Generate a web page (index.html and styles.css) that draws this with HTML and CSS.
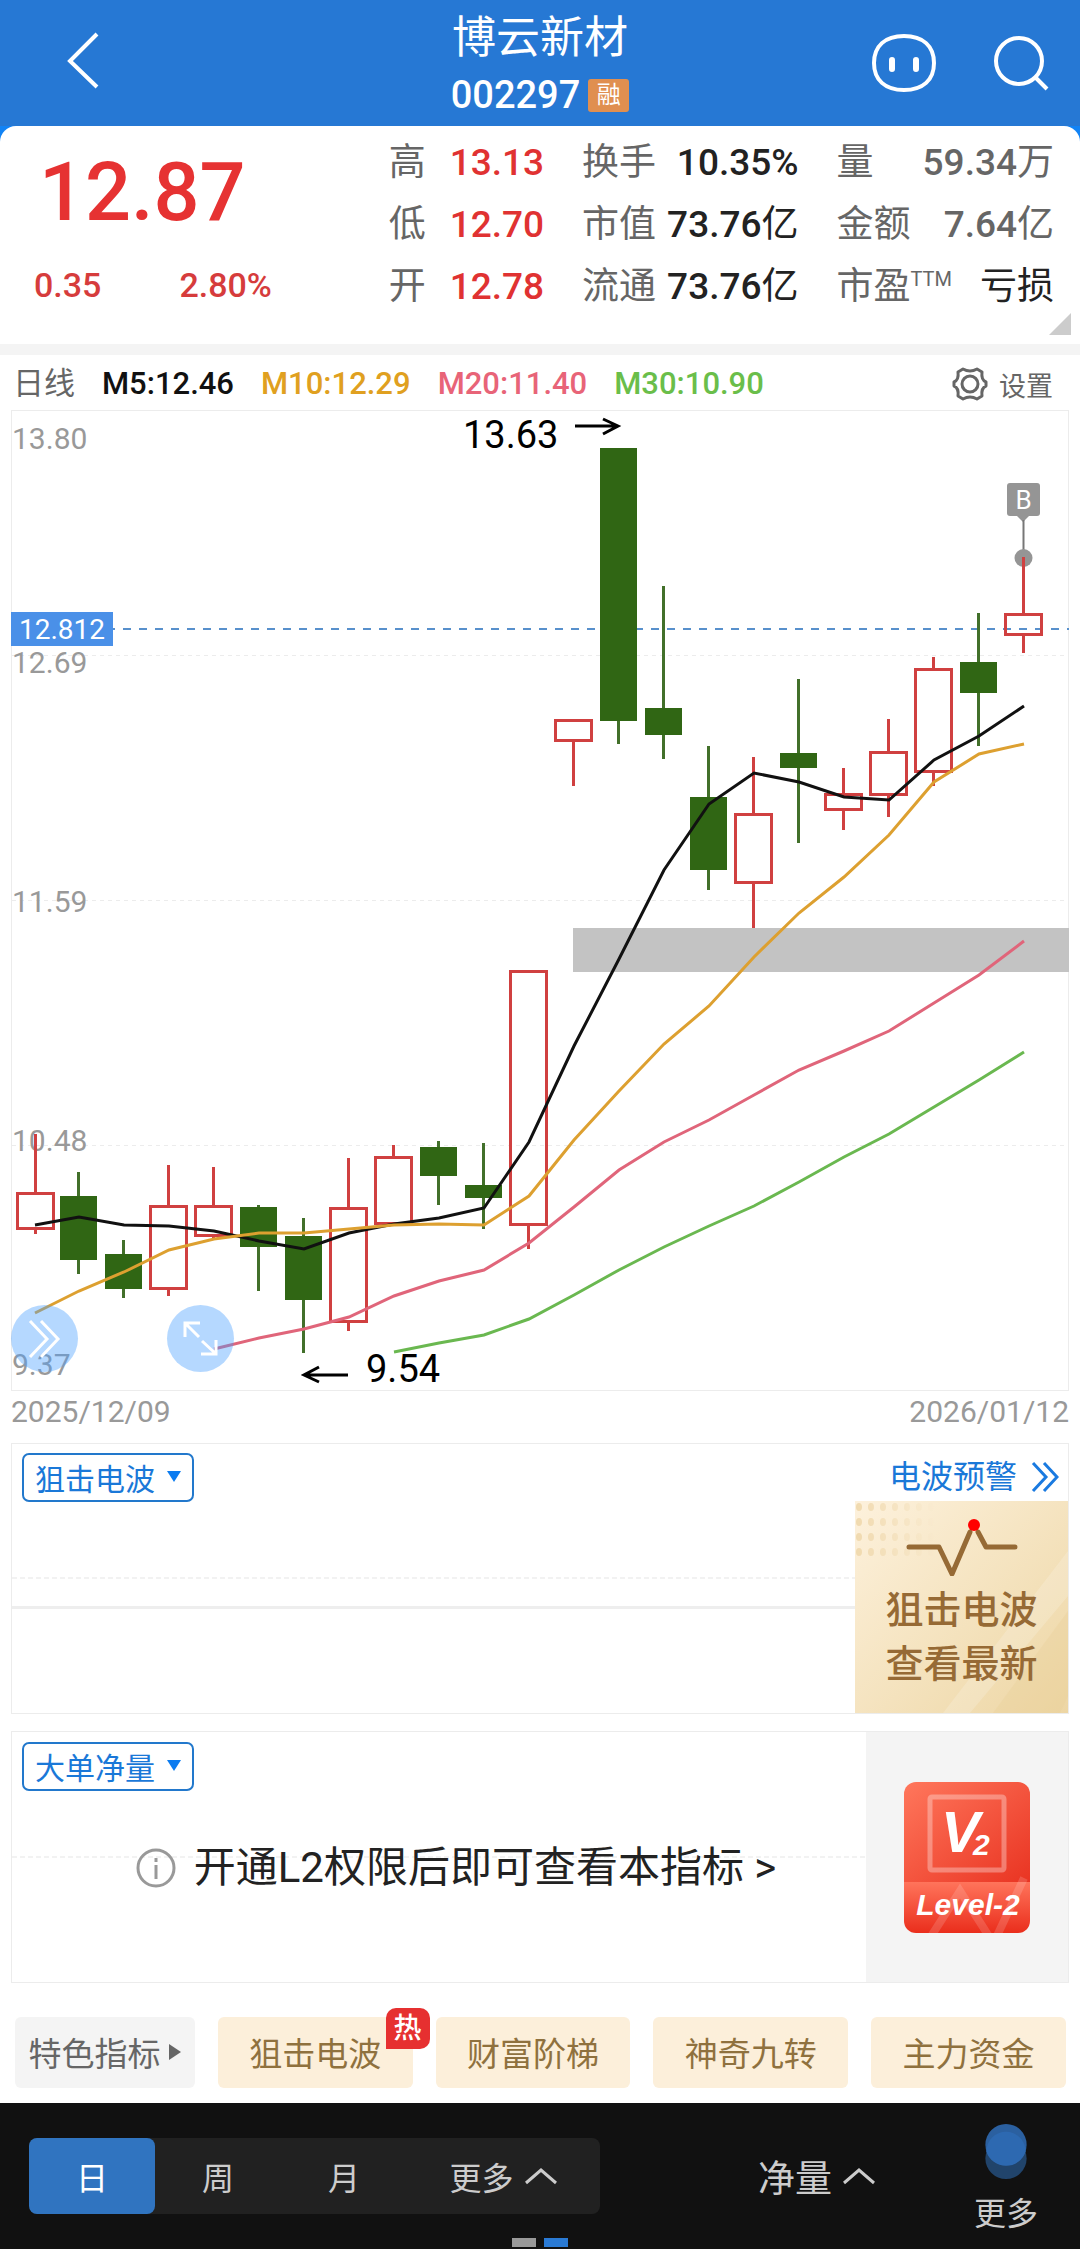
FILE: index.html
```html
<!DOCTYPE html>
<html lang="zh-CN">
<head>
  <meta charset="utf-8">
  <title>博云新材 002297</title>
  <meta name="viewport" content="width=device-width, initial-scale=1.0">
  <link rel="stylesheet" href="styles.css">
</head>

<body>

<header class="topbar">
  <button class="back" aria-label="返回">
    <svg width="36" height="60" viewBox="0 0 36 60"><path d="M33 4 6 31 33 57" fill="none" stroke="#fff" stroke-width="4"/></svg>
  </button>
  <div class="stock">
    <h1>博云新材</h1>
    <div class="code">002297 <span class="rong">融</span></div>
  </div>
  <div class="tools">
    <button aria-label="助手">
      <svg width="64" height="58" viewBox="0 0 64 58">
        <path d="M32 2C51 2 62 12 62 29S51 56 32 56 2 46 2 29 13 2 32 2z" fill="none" stroke="#fff" stroke-width="4"/>
        <path d="M20 26v9M44 26v9" stroke="#fff" stroke-width="6" stroke-linecap="round"/>
      </svg>
    </button>
    <button aria-label="搜索">
      <svg width="58" height="58" viewBox="0 0 58 58" fill="none" stroke="#fff" stroke-width="4">
        <circle cx="27" cy="27" r="23"/><path d="M43 43 55 55"/>
      </svg>
    </button>
  </div>
</header>

<main>
<section class="quote">
  <div class="price">
    <div class="last">12.87</div>
    <div class="change"><span>0.35</span><span>2.80%</span></div>
  </div>
  <dl>
    <div><dt>高</dt><dd class="red">13.13</dd></div>
    <div><dt>低</dt><dd class="red">12.70</dd></div>
    <div><dt>开</dt><dd class="red">12.78</dd></div>
  </dl>
  <dl>
    <div><dt>换手</dt><dd>10.35%</dd></div>
    <div><dt>市值</dt><dd>73.76<span class="unit">亿</span></dd></div>
    <div><dt>流通</dt><dd>73.76<span class="unit">亿</span></dd></div>
  </dl>
  <dl>
    <div><dt>量</dt><dd class="gray">59.34<span class="unit">万</span></dd></div>
    <div><dt>金额</dt><dd class="gray">7.64<span class="unit">亿</span></dd></div>
    <div><dt>市盈<sup>TTM</sup></dt><dd><span class="unit">亏损</span></dd></div>
  </dl>
  <span class="corner"></span>
</section>

<section class="legend">
  <span class="gray">日线</span>
  <span class="m5">M5:12.46</span>
  <span class="m10">M10:12.29</span>
  <span class="m20">M20:11.40</span>
  <span class="m30">M30:10.90</span>
  <button class="settings">
    <svg width="36" height="36" viewBox="0 0 36 36" fill="none" stroke="#666" stroke-width="3">
      <path d="M11 3Q18 7 25 3L30 6Q29 14 34 16V20Q29 22 30 30L25 33Q18 29 11 33L6 30Q7 22 2 20V16Q7 14 6 6Z" stroke-linejoin="round"/>
      <circle cx="18" cy="18" r="8"/>
    </svg>
    设置
  </button>
</section>

<section class="chart">
  <svg class="kline" viewBox="11 410 1058 981">
    <rect class="frame" x="11.5" y="410.5" width="1057" height="980"/>
    <path class="grid" d="M12 655.5H1069M12 900.5H1069M12 1145.5H1069"/>
    <rect x="573" y="928" width="496" height="44" fill="#c3c3c3"/>

    <path class="cost" d="M107 629H1069"/>

    <g class="axis">
      <text x="12" y="449">13.80</text>
      <text x="12" y="673">12.69</text>
      <text x="12" y="912">11.59</text>
      <text x="12" y="1151">10.48</text>
      <text x="12" y="1375">9.37</text>
    </g>

    <!-- buy marker -->
    <rect x="1007" y="483" width="33" height="33" rx="3" fill="#959595"/>
    <path d="M1016 515h14l-7 7z" fill="#959595"/>
    <path d="M1023.500 520v40" stroke="#777" stroke-width="2"/>
    <circle cx="1023.500" cy="558" r="9" fill="#959595"/>
    <text class="buy" x="1023.500" y="509">B</text>

    <!-- falling days -->
    <g class="down">
      <path d="M78.500 1172V1274M123.500 1240V1298M258.500 1205V1291M303.500 1218V1353M438.500 1141V1205M483.500 1143V1229M618.500 448V744M663.500 586V759M708.500 746V890M798.500 679V843M978.500 613V746"/>
      <rect x="60" y="1196" width="37" height="64"/>
      <rect x="105" y="1254" width="37" height="35"/>
      <rect x="240" y="1207" width="37" height="40"/>
      <rect x="285" y="1236" width="37" height="64"/>
      <rect x="420" y="1147" width="37" height="29"/>
      <rect x="465" y="1185" width="37" height="13"/>
      <rect x="600" y="448" width="37" height="273"/>
      <rect x="645" y="708" width="37" height="27"/>
      <rect x="690" y="797" width="37" height="73"/>
      <rect x="780" y="753" width="37" height="15"/>
      <rect x="960" y="662" width="37" height="31"/>
    </g>

    <!-- rising days -->
    <g class="up">
      <path d="M35.500 1134V1194M35.500 1228V1234M168.500 1165V1206M168.500 1289V1296M213.500 1167V1206M213.500 1236V1239M348.500 1158V1208M348.500 1322V1331M393.500 1145V1157M528.500 1225V1249M573.500 741V786M753.500 757V815M753.500 883V928M843.500 768V794M843.500 810V830M888.500 719V752M888.500 795V817M933.500 657V669M933.500 772V786M1023.500 557V614M1023.500 635V653"/>
      <rect x="17.500" y="1193.500" width="36" height="35"/>
      <rect x="150.500" y="1206.500" width="36" height="82"/>
      <rect x="195.500" y="1206.500" width="36" height="29"/>
      <rect x="330.500" y="1208.500" width="36" height="113"/>
      <rect x="375.500" y="1157.500" width="36" height="66"/>
      <rect x="510.500" y="971.500" width="36" height="253"/>
      <rect x="555.500" y="720.500" width="36" height="20"/>
      <rect x="735.500" y="814.500" width="36" height="68"/>
      <rect x="825.500" y="794.500" width="36" height="15"/>
      <rect x="870.500" y="752.500" width="36" height="42"/>
      <rect x="915.500" y="669.500" width="36" height="102"/>
      <rect x="1005.500" y="614.500" width="36" height="20"/>
    </g>

    <!-- moving averages -->
    <polyline class="ma s5" points="35,1225 79,1217 124,1225 169,1226 214,1231 259,1241 304,1249 349,1233 394,1224 439,1218 484,1208 529,1142 574,1046 619,959 664,870 709,804 754,773 799,782 844,797 889,800 934,760 979,736 1024,706"/>
    <polyline class="ma s10" points="35,1313 79,1291 124,1272 169,1250 214,1239 259,1233 304,1233 349,1229 394,1225 439,1224 484,1225 529,1196 574,1140 619,1091 664,1044 709,1006 754,957 799,913 844,877 889,835 934,782 979,754 1024,744"/>
    <polyline class="ma s20" points="214,1349 259,1338 304,1329 349,1317 394,1296 439,1281 484,1270 529,1243 574,1207 619,1170 664,1142 709,1120 754,1095 799,1070 844,1051 889,1031 934,1003 979,975 1024,941"/>
    <polyline class="ma s30" points="394,1352 439,1343 484,1335 529,1319 574,1295 619,1270 664,1247 709,1226 754,1206 799,1182 844,1157 889,1134 934,1107 979,1080 1024,1052"/>

    <rect x="11" y="612" width="102" height="34" fill="#4a90e8"/>
    <text class="costText" x="19" y="639">12.812</text>

    <!-- highest and lowest price -->
    <text class="peak" x="463" y="448">13.63</text>
    <path class="arrow" d="M575 426H618M603 419 618 426 603 434"/>
    <text class="peak" x="366" y="1382">9.54</text>
    <path class="arrow" d="M348 1375H304M319 1367 304 1375 319 1382"/>
  </svg>

  <button class="round" aria-label="展开">
    <svg width="40" height="44" viewBox="0 0 40 44"><path d="M5 4 22 22 5 40M16 4 33 22 16 40"/></svg>
  </button>
  <button class="round full" aria-label="全屏">
    <svg width="40" height="44" viewBox="0 0 40 44"><path d="M4 20V6H19M4 6 18 20M21 24 35 37M35 23V37H20"/></svg>
  </button>
</section>

<div class="dates"><span>2025/12/09</span><span>2026/01/12</span></div>

<section class="panel wave">
  <div class="waveLeft">
    <button class="picker">狙击电波 <i class="tri"></i></button>
  </div>
  <a class="alert" href="#">电波预警
    <svg width="28" height="32" viewBox="0 0 28 32"><path d="M2 2 15 16 2 30M13 2 26 16 13 30" fill="none" stroke="#1a7ae0" stroke-width="3"/></svg>
  </a>
  <a class="promo" href="#">
    <svg class="promoBg" viewBox="0 0 213 212" preserveAspectRatio="none">
      <defs>
        <pattern id="dots" width="12" height="15" patternUnits="userSpaceOnUse"><ellipse cx="4" cy="6" rx="3" ry="4" fill="#f0d9ae"/></pattern>
        <linearGradient id="fade"><stop offset="0" stop-color="#fff"/><stop offset="1" stop-color="#000"/></linearGradient>
        <mask id="m"><rect width="80" height="60" fill="url(#fade)"/></mask>
      </defs>
      <rect width="80" height="60" fill="url(#dots)" mask="url(#m)"/>
      <path d="M88 212 213 50V95L115 212z" fill="#fff" opacity=".18"/>
      <path d="M138 212 213 110V195L205 212z" fill="#e8cd95" opacity=".3"/>
    </svg>
    <svg class="pulse" width="114" height="60" viewBox="0 0 114 60" fill="none">
      <path d="M4 31H34L47 58 65 16M73 16 81 31H110" stroke="#966a35" stroke-width="5" stroke-linecap="round" stroke-linejoin="round"/>
      <circle cx="69" cy="9" r="6" fill="#f00"/>
    </svg>
    <span>狙击电波<br>查看最新</span>
  </a>
</section>

<section class="panel big">
  <div class="bigLeft">
    <button class="picker">大单净量 <i class="tri"></i></button>
    <a class="unlock" href="#">
      <svg width="40" height="40" viewBox="0 0 40 40" fill="none" stroke="#999" stroke-width="3">
        <circle cx="20" cy="20" r="18"/><path d="M20 17V31M20 10V14"/>
      </svg>
      开通L2权限后即可查看本指标 &gt;
    </a>
  </div>
  <a class="level" href="#" aria-label="Level-2">
    <svg width="126" height="151" viewBox="0 0 126 151">
      <defs>
        <linearGradient id="lv" x2="1" y2="1"><stop offset="0" stop-color="#ff775c"/><stop offset="1" stop-color="#e93422"/></linearGradient>
        <linearGradient id="lb" x2="0" y2="1"><stop offset="0" stop-color="#ff745b"/><stop offset="1" stop-color="#ea2e1c"/></linearGradient>
        <clipPath id="lc"><rect width="126" height="151" rx="12"/></clipPath>
      </defs>
      <g clip-path="url(#lc)">
        <rect width="126" height="101" fill="url(#lv)"/>
        <rect y="100" width="126" height="51" fill="url(#lb)"/>
        <path d="M26 156 56 109 86 156M92 156 120 96" fill="none" stroke="#fff" stroke-width="8" opacity=".15"/>
      </g>
      <rect x="26" y="15" width="74" height="73" rx="2" fill="none" stroke="#fff" stroke-width="5" opacity=".32"/>
      <text class="lvV" x="37" y="70">V</text>
      <text class="lv2" x="69" y="73">2</text>
      <text class="lvText" x="64" y="133">Level-2</text>
    </svg>
  </a>
</section>

<nav class="chips">
  <button class="chip plain">特色指标 <i class="triRight"></i></button>
  <button class="chip">狙击电波<span class="hot">热</span></button>
  <button class="chip">财富阶梯</button>
  <button class="chip">神奇九转</button>
  <button class="chip">主力资金</button>
</nav>
</main>

<footer class="bottom">
  <div class="bar">
    <div class="periods">
      <button class="on">日</button>
      <button>周</button>
      <button>月</button>
      <button class="wide">更多 <svg width="34" height="18" viewBox="0 0 34 18"><path d="M2 16 17 3 32 16"/></svg></button>
    </div>
    <button class="net">净量 <svg width="34" height="18" viewBox="0 0 34 18"><path d="M2 16 17 3 32 16"/></svg></button>
    <button class="more">
      <svg width="42" height="56" viewBox="0 0 42 56">
        <circle cx="21" cy="35" r="21" fill="#21446b"/>
        <circle cx="21" cy="21" r="21" fill="#2b60a0"/>
        <path d="M1 28A20 20 0 0 1 41 28 21 21 0 0 1 1 28z" fill="#2d69b1"/>
      </svg>
      更多
    </button>
  </div>
  <div class="pages"><i></i><i class="on"></i></div>
</footer>

</body>
</html>
```

FILE: styles.css
```css
* {
  box-sizing: border-box;
}

body {
  margin: 0;
  background: #fff;
  color: #222;
  font-family: Roboto, "Noto Sans CJK SC", sans-serif;
}

button {
  padding: 0;
  border: none;
  background: none;
  color: inherit;
  font-family: inherit;
}

a {
  text-decoration: none;
}

svg {
  display: block;
}

.red { color: #e03232; }
.gray { color: #666; }

/* top bar */
.topbar {
  display: grid;
  grid-template-columns: 1fr auto 1fr;
  height: 126px;
  padding: 0 30px;
  background: #2678d4;
  color: #fff;
}
.back {
  justify-self: start;
  align-self: start;
  padding: 30px 34px 0;
}
.stock {
  display: flex;
  flex-direction: column;
  align-items: center;
  padding-top: 10px;
}
.stock h1 {
  margin: 0;
  font-size: 44px;
  line-height: 56px;
  font-weight: 400;
}
.code {
  display: flex;
  align-items: center;
  gap: 8px;
  font-size: 38px;
  line-height: 58px;
  font-weight: 500;
}
.rong {
  width: 41px;
  border-radius: 3px;
  background: #e08f50;
  font-size: 24px;
  line-height: 33px;
  font-weight: 400;
  text-align: center;
}
.tools {
  display: flex;
  justify-content: flex-end;
  align-items: center;
  gap: 56px;
}

/* blue shows behind the rounded corners of the quote card */
main {
  background: linear-gradient(#1283f5 40px, #fff 40px);
}

/* quote */
.quote {
  position: relative;
  display: grid;
  grid-template-columns: 316fr 155fr 216fr 217fr;
  column-gap: 38px;
  height: 229px;
  padding: 6px 26px 0 34px;
  border-bottom: 11px solid #f4f4f4;
  border-radius: 16px 16px 0 0;
  background: #fff;
}
.last {
  padding-left: 5px;
  color: #e63232;
  font-size: 81px;
  line-height: 122px;
  font-weight: 500;
}
.change {
  display: flex;
  gap: 78px;
  color: #d63c3c;
  font-size: 34px;
  line-height: 62px;
  font-weight: 500;
}
dl {
  margin: 0;
  line-height: 62px;
}
dl div {
  display: flex;
  justify-content: space-between;
  height: 62px;
  white-space: nowrap;
}
dt {
  color: #666;
  font-size: 37px;
}
dd {
  margin: 0;
  font-size: 37px;
  font-weight: 500;
}
.unit {
  font-weight: 400;
}
dl sup {
  font-size: 20px;
  line-height: 20px;
}
.corner {
  position: absolute;
  right: 9px;
  bottom: 9px;
  border-left: 22px solid transparent;
  border-bottom: 22px solid #ccc;
}

/* moving average legend */
.legend {
  display: flex;
  align-items: center;
  gap: 27px;
  height: 55px;
  padding: 3px 27px 0 13px;
  background: #fff;
  font-size: 31px;
  line-height: 40px;
}
.m5 { color: #111; }
.m10 { color: #e0a020; }
.m20 { color: #e86478; }
.m30 { color: #6abe4a; }
.m5, .m10, .m20, .m30 { font-weight: 500; }
.settings {
  display: flex;
  align-items: center;
  gap: 11px;
  margin-left: auto;
  color: #666;
  font-size: 27px;
}

/* candles */
.chart {
  position: relative;
  padding: 0 11px;
  background: #fff;
}
.kline {
  width: 100%;
  height: auto;
}
.frame {
  fill: none;
  stroke: #ececec;
}
.grid {
  stroke: #ececec;
  stroke-dasharray: 4 4;
}
.cost {
  stroke: #5890cc;
  stroke-width: 2;
  stroke-dasharray: 8 8;
}
.axis {
  fill: #999;
  font-size: 30px;
}
.buy {
  fill: #fff;
  font-size: 26px;
  text-anchor: middle;
}
.costText {
  fill: #fff;
  font-size: 28px;
}
.peak {
  fill: #000;
  font-size: 38px;
}
.arrow {
  fill: none;
  stroke: #000;
  stroke-width: 3;
}
.down {
  fill: #306614;
}
.down path {
  stroke: #42702a;
  stroke-width: 3;
}
.up {
  fill: none;
  stroke: #d04040;
  stroke-width: 3;
}
.ma {
  fill: none;
  stroke-width: 3;
}
.s5 { stroke: #111; }
.s10 { stroke: #dda030; }
.s20 { stroke: #e0657a; }
.s30 { stroke: #6ab850; }

.round {
  position: absolute;
  left: 11px;
  bottom: 19px;
  display: flex;
  align-items: center;
  justify-content: center;
  width: 67px;
  height: 67px;
  border-radius: 50%;
  background: rgba(70, 158, 255, .4);
}
.round.full {
  left: 167px;
}
.round path {
  fill: none;
  stroke: #fff;
  stroke-width: 3;
}

.dates {
  display: flex;
  justify-content: space-between;
  height: 52px;
  padding: 0 11px;
  background: #fff;
  color: #999;
  font-size: 30px;
  line-height: 41px;
}

/* indicator panels */
.panel {
  display: grid;
  border: 1px solid #ececec;
  margin: 0 11px;
  background: #fff;
}
.picker {
  display: flex;
  align-items: center;
  gap: 12px;
  height: 49px;
  padding: 0 11px 2px;
  border: 2px solid #2278cc;
  border-radius: 7px;
  background: #fff;
  color: #1a78d8;
  font-size: 30px;
}
.tri {
  border: 7px solid transparent;
  border-top: 11px solid #0c7cf0;
  border-bottom: 0;
}
.wave {
  grid-template-columns: 1fr 213px;
  grid-template-rows: 57px 212px;
}
.waveLeft {
  grid-row: span 2;
  padding: 9px 10px;
  background:
    linear-gradient(#eee, #eee) 0 162px / 100% 3px no-repeat,
    repeating-linear-gradient(90deg, #f2f2f2 0 5px, transparent 5px 8px) 0 133px / 100% 2px no-repeat;
}
.alert {
  display: flex;
  align-items: center;
  justify-content: flex-end;
  gap: 14px;
  padding: 8px 9px 0 0;
  color: #1a78d8;
  font-size: 32px;
  line-height: 40px;
  white-space: nowrap;
}
.promo {
  position: relative;
  display: flex;
  flex-direction: column;
  align-items: center;
  padding-top: 15px;
  background: linear-gradient(135deg, #fdf1dc, #edd6a4);
  color: #966a35;
  font-size: 38px;
  line-height: 54px;
  font-weight: 500;
}
.promoBg {
  position: absolute;
  left: 0;
  top: 0;
  width: 100%;
  height: 100%;
}
.pulse, .promo span {
  position: relative;
}
.promo span {
  margin-top: 7px;
}

.big {
  grid-template-columns: 1fr 202px;
  height: 252px;
  margin-top: 17px;
}
.bigLeft {
  padding: 10px;
  background: repeating-linear-gradient(90deg, #f2f2f2 0 5px, transparent 5px 8px) 0 124px / 100% 2px no-repeat;
}
.unlock {
  display: flex;
  align-items: center;
  justify-content: center;
  gap: 18px;
  margin-top: 52px;
  padding-left: 34px;
  color: #222;
  font-size: 42px;
  line-height: 50px;
  white-space: nowrap;
}
.level {
  display: flex;
  justify-content: center;
  padding-top: 50px;
  background: #f4f4f4;
}
.level text {
  fill: #fff;
  font-family: "Liberation Sans", Arial, sans-serif;
  font-weight: 700;
  font-style: italic;
}
.level .lvV { font-size: 58px; }
.lv2 { font-size: 30px; }
.lvText {
  font-size: 30px;
  text-anchor: middle;
}

/* indicator shortcuts */
.chips {
  display: grid;
  grid-template-columns: 180fr 195fr 195fr 195fr 195fr;
  gap: 23px;
  padding: 34px 14px 15px 15px;
  background: #fff;
}
.chip {
  position: relative;
  height: 71px;
  padding-bottom: 2px;
  border-radius: 6px;
  background: #fcefda;
  color: #8f713e;
  font-size: 33px;
  white-space: nowrap;
}
.chip.plain {
  display: flex;
  align-items: center;
  justify-content: center;
  gap: 9px;
  background: #f4f4f4;
  color: #666;
}
.triRight {
  border: 8px solid transparent;
  border-left: 12px solid #666;
  border-right: 0;
}
.hot {
  position: absolute;
  right: -17px;
  top: -9px;
  width: 44px;
  border-radius: 10px 10px 10px 0;
  background: #e63030;
  color: #fff;
  font-size: 28px;
  line-height: 41px;
  font-weight: 500;
}

/* bottom bar */
.bottom {
  height: 146px;
  background: #111;
  color: #ccc;
  font-size: 32px;
}
.bottom button {
  font-size: inherit;
}
.bar {
  display: flex;
  height: 135px;
  padding: 0 42px 0 29px;
}
.periods {
  display: flex;
  flex: 0 1 571px;
  height: 76px;
  margin-top: 35px;
  border-radius: 8px;
  background: #212121;
}
.periods button {
  flex: 126;
}
.periods .wide {
  flex: 193;
}
.periods .on {
  border-radius: 8px;
  background: #3074c0;
  color: #fff;
}
.wide, .net {
  display: flex;
  align-items: center;
  justify-content: center;
  gap: 10px;
}
.bottom path {
  stroke-width: 3;
}
.wide path, .net path {
  fill: none;
  stroke: #ccc;
}
.bottom .net {
  flex: 1;
  height: 76px;
  margin-top: 35px;
  padding-left: 60px;
  font-size: 37px;
}
.more {
  display: flex;
  flex-direction: column;
  align-items: center;
  gap: 11px;
  padding-top: 21px;
  line-height: 48px;
}
.pages {
  display: flex;
  justify-content: center;
  gap: 8px;
}
.pages i {
  width: 24px;
  height: 9px;
  background: #999;
}
.pages .on {
  background: #2a7ad4;
}
```
